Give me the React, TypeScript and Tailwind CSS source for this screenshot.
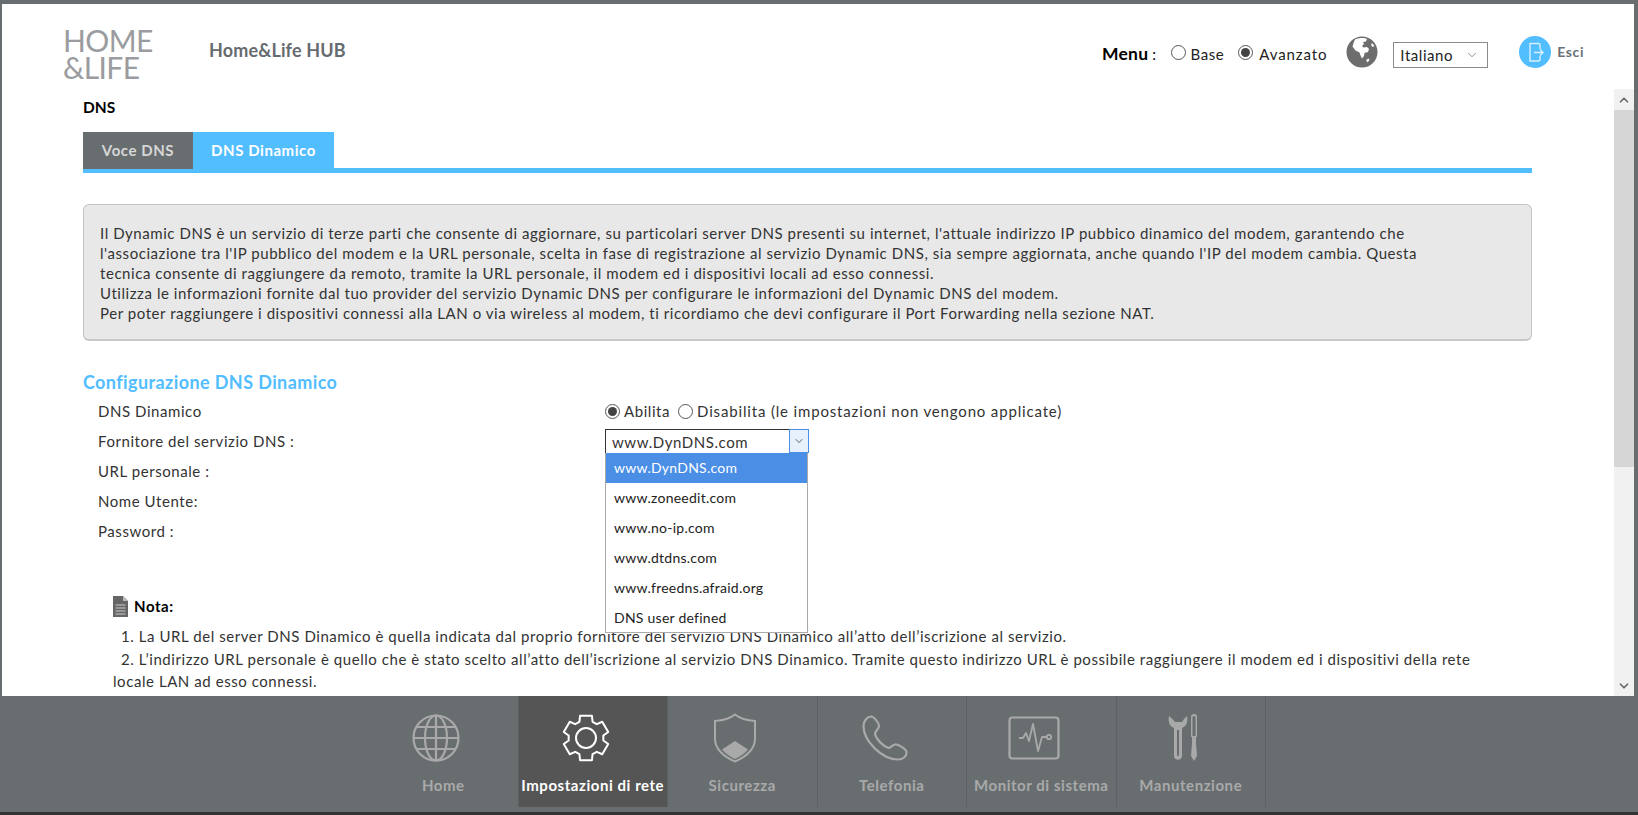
import { ChevronDown, ChevronUp } from 'lucide-react'

const font = "font-['Lato','Noto_Sans',sans-serif]"

function Radio({ on = false }: { on?: boolean }) {
  return (
    <span className="inline-flex w-[15px] h-[15px] rounded-full border border-[#555] bg-white items-center justify-center flex-shrink-0">
      {on && <span className="w-[9px] h-[9px] rounded-full bg-[#444]" />}
    </span>
  )
}

function GlobeSolid() {
  return (
    <svg width="32" height="32" viewBox="0 0 32 32">
      <circle cx="16" cy="16" r="15.5" fill="#6d6d6d" />
      <path d="M9 3.500c3-1.500 9-2 12-.5l-1 2.500-3 .5 1 2-2 2 1.500 1.500 3.500-.5 2 2-1 3-3.500 1-.5 3-2 2.500-1.500-3-1-3-4-2-3-4 1-3.500z" fill="#fff" />
      <path d="M20 24l2.500-1.500 1 1.500-2 2.500zM26 7l2.500 3-2 1-1.500-2z" fill="#fff" />
    </svg>
  )
}

function ExitIcon() {
  return (
    <svg width="32" height="32" viewBox="0 0 32 32">
      <circle cx="16" cy="16" r="16" fill="#52bdff" />
      <path d="M21 13V9a1.500 1.500 0 0 0-1.500-1.500H11V25h8.500a1.500 1.500 0 0 0 1.500-1.500V20" fill="none" stroke="#d8f0ff" strokeWidth="1.400" />
      <path d="M15 16.500h9M21 13.500l3 3-3 3" fill="none" stroke="#d8f0ff" strokeWidth="1.400" />
    </svg>
  )
}

function GlobeLine() {
  return (
    <svg width="48" height="48" viewBox="0 0 48 48" fill="none" stroke="currentColor" strokeWidth="2.200">
      <circle cx="24" cy="24" r="22.500" />
      <ellipse cx="24" cy="24" rx="11" ry="22.500" />
      <path d="M24 1.500v45M1.500 24h45M5 13h38M5 35h38" />
    </svg>
  )
}

// six flat teeth, drawn as one outline
function gearPath() {
  const pt = (r: number, deg: number) => {
    const a = (deg * Math.PI) / 180
    return `${(24 + r * Math.cos(a)).toFixed(2)} ${(24 + r * Math.sin(a)).toFixed(2)}`
  }
  let d = ''
  for (let i = 0; i < 6; i++) {
    const c = -90 + i * 60
    d += `${i === 0 ? 'M' : 'L'}${pt(17.5, c - 22)} L${pt(23, c - 15)} L${pt(23, c + 15)} L${pt(17.5, c + 22)} `
  }
  return d + 'Z'
}

function GearIcon() {
  return (
    <svg width="48" height="48" viewBox="0 0 48 48" fill="none" stroke="currentColor" strokeWidth="2" strokeLinejoin="round">
      <path d={gearPath()} />
      <circle cx="24" cy="24" r="10" />
    </svg>
  )
}

function ShieldIcon() {
  return (
    <svg width="44" height="50" viewBox="0 0 44 50" fill="none" stroke="currentColor" strokeWidth="2">
      <path d="M22 1.500c5 4 12 6 20 6.500v18c0 10-9 18-20 22.500C11 44 2 36 2 26V8c8-.5 15-2.500 20-6.500z" />
      <path d="M22 28l13 8.500c-3 4-8 7-13 9.500-5-2.500-10-5.500-13-9.500z" fill="currentColor" stroke="none" />
    </svg>
  )
}

function PhoneIcon() {
  return (
    <svg width="46" height="46" viewBox="0 0 46 46" fill="none" stroke="currentColor" strokeWidth="2.200" strokeLinejoin="round">
      <path d="M9 1.500C5 2 1.500 6 1.500 11 1.500 26 20 44.500 36 44.500c5 0 9-3.500 8.500-7.500C44 34 36 29 33 29.500c-3 .5-4 3.500-6.500 3.500-6-2-12.500-9-13.500-14 0-3 4-5 4-8S12 1.500 9 1.500z" />
    </svg>
  )
}

function MonitorIcon() {
  return (
    <svg width="52" height="44" viewBox="0 0 52 44" fill="none" stroke="currentColor" strokeWidth="2.200">
      <rect x="1.500" y="1.500" width="49" height="41" rx="3" />
      <path d="M11 22h4l3-5 3 8 4-17 5 27 4-14h4" strokeWidth="1.800" strokeLinejoin="round" />
      <circle cx="41" cy="21" r="2.200" strokeWidth="1.800" />
    </svg>
  )
}

function ToolsIcon() {
  return (
    <svg width="32" height="48" viewBox="0 0 32 48" fill="none">
      <path d="M1 2c-1 5 0 10 5 12v28c0 5 8 5 8 0V14c5-2 6-7 5-12l-3 3-2 3H7L4.500 5z" fill="currentColor" />
      <path d="M9 16h2v25a1 1 0 0 1-2 0z" fill="#686e70" />
      <path d="M23 3a3 3 0 0 1 6 0v20h-1v6l1 13-3 5-3-5 1-13v-6h-1z" fill="currentColor" />
      <path d="M24.500 3.500a1.500 1.500 0 0 1 3 0V22h-3z" fill="#686e70" />
    </svg>
  )
}

function DocIcon() {
  return (
    <svg width="15" height="21" viewBox="0 0 15 21">
      <path d="M0 0h10l5 5v16H0z" fill="#666" />
      <path d="M10 0l5 5h-5z" fill="#bbb" />
      <path d="M2.500 9h10M2.500 12h10M2.500 15h10M2.500 18h10" stroke="#ccc" strokeWidth="1" />
    </svg>
  )
}

const navItems = [
  { label: 'Home', icon: <GlobeLine /> },
  { label: 'Impostazioni di rete', icon: <GearIcon />, active: true },
  { label: 'Sicurezza', icon: <ShieldIcon /> },
  { label: 'Telefonia', icon: <PhoneIcon /> },
  { label: 'Monitor di sistema', icon: <MonitorIcon /> },
  { label: 'Manutenzione', icon: <ToolsIcon /> },
]

const dnsOptions = ['www.DynDNS.com', 'www.zoneedit.com', 'www.no-ip.com', 'www.dtdns.com', 'www.freedns.afraid.org', 'DNS user defined']

const infoLines = [
  "Il Dynamic DNS è un servizio di terze parti che consente di aggiornare, su particolari server DNS presenti su internet, l'attuale indirizzo IP pubbico dinamico del modem, garantendo che",
  "l'associazione tra l'IP pubblico del modem e la URL personale, scelta in fase di registrazione al servizio Dynamic DNS, sia sempre aggiornata, anche quando l'IP del modem cambia. Questa",
  'tecnica consente di raggiungere da remoto, tramite la URL personale, il modem ed i dispositivi locali ad esso connessi.',
  'Utilizza le informazioni fornite dal tuo provider del servizio Dynamic DNS per configurare le informazioni del Dynamic DNS del modem.',
  'Per poter raggiungere i dispositivi connessi alla LAN o via wireless al modem, ti ricordiamo che devi configurare il Port Forwarding nella sezione NAT.',
]

function Row({ label, children }: { label: string; children?: React.ReactNode }) {
  return (
    <div className="flex h-[30px] items-center">
      <div className="w-[522px] pl-[15px]">{label}</div>
      {children}
    </div>
  )
}

export default function App() {
  return (
    <div className={`${font} w-[1638px] h-[815px] bg-[#686e70] pt-1 pl-0.5 pr-1 flex flex-col overflow-hidden text-[15px] tracking-[0.56px] text-[#333]`}>
      <div className="flex-1 min-h-0 bg-white flex flex-col">
        {/* header */}
        <div className="h-[85px] flex-shrink-0 flex items-start pl-[61px] pr-[50px]">
          <div className="w-[146px] mt-[23px] text-[30px] leading-[27px] font-normal text-[#9a9ca0] tracking-[-0.6px]">
            <div>HOME</div>
            <div>&amp;LIFE</div>
          </div>
          <div className="mt-[34px] text-[18px] leading-6 font-bold tracking-[0.15px] text-[#666b70]">Home&amp;Life HUB</div>
          <div className="ml-auto flex items-center mt-[32px] h-8">
            <span className="text-[17.500px] font-bold text-black mt-1 tracking-[0.2px]">Menu</span>
            <span className="ml-1 mr-3.5 mt-1 text-black">:</span>
            <Radio />
            <span className="ml-[5px] mr-3.5 mt-1 text-[#222]">Base</span>
            <Radio on />
            <span className="ml-1.5 mr-[19px] mt-1 text-[#222] tracking-[0.9px]">Avanzato</span>
            <GlobeSolid />
            <div className="ml-[15px] mt-[6px] w-[95px] h-[26px] border border-[#8a8a8a] flex items-center justify-between pl-1.5 pr-2 text-[#222]">
              Italiano
              <ChevronDown size={14} strokeWidth={1.100} className="text-[#555]" />
            </div>
            <div className="ml-[31px]"><ExitIcon /></div>
            <span className="ml-1.5 -mt-0.5 text-[14px] font-bold text-[#6b7076]">Esci</span>
          </div>
        </div>

        {/* scrolling content */}
        <div className="h-[607px] flex-shrink-0 flex">
          <div className="flex-1 min-w-0 overflow-hidden pl-[81px] pr-[82px] relative">
            <h1 className="pt-1.5 h-[43px] text-[15.500px] tracking-normal font-bold text-black leading-6">DNS</h1>
            <div className="flex h-[41px] border-b-[5px] border-[#52bdff] font-bold">
              <div className="w-[110px] h-[37px] bg-[#686e70] text-[#d6d6d6] flex items-center justify-center">Voce DNS</div>
              <div className="w-[141px] h-[36px] bg-[#52bdff] text-white flex items-center justify-center">DNS Dinamico</div>
            </div>
            <div className="mt-[31px] h-[137px] rounded-md border border-[#c4c4c4] border-b-2 border-b-[#c8c8c8] bg-[#e8e8e8] pt-[18px] pl-4 leading-5 text-[#333] whitespace-nowrap">
              {infoLines.map(l => <div key={l}>{l}</div>)}
            </div>
            <h2 className="mt-[29px] text-[18px] tracking-[0.4px] leading-6 font-bold text-[#52bdff]">Configurazione DNS Dinamico</h2>
            <div className="mt-[2px]">
              <Row label="DNS Dinamico">
                <div className="flex items-center">
                  <Radio on /><span className="ml-1 mr-2">Abilita</span>
                  <Radio /><span className="ml-1 tracking-[0.84px]">Disabilita (le impostazioni non vengono applicate)</span>
                </div>
              </Row>
              <Row label="Fornitore del servizio DNS :">
                <div className="w-[204px] h-[24px] flex border-t border-l border-[#333] border-b-[#aaa] relative">
                  <div className="flex-1 pl-1.5 leading-[24px]">www.DynDNS.com</div>
                  <div className="w-5 -mt-px h-[24px] border border-[#4a8ee6] bg-[#e6f1fb] flex items-center justify-center">
                    <ChevronDown size={12} strokeWidth={1.500} className="text-[#333]" />
                  </div>
                  <div className="absolute left-[-1px] top-[23px] w-[203px] h-[180px] bg-white border-x border-b border-[#aaa] z-10">
                    {dnsOptions.map((o, i) => (
                      <div key={o} className={`h-[30px] pl-2 leading-[30px] text-[14px] tracking-[0.25px] ${i === 0 ? 'bg-[#4a8ee6] text-white' : 'text-[#222]'}`}>{o}</div>
                    ))}
                  </div>
                </div>
              </Row>
              <Row label="URL personale :" />
              <Row label="Nome Utente:" />
              <Row label="Password :" />
            </div>
            <div className="mt-[50px] pl-[30px] flex items-center h-[21px] gap-1.5">
              <DocIcon />
              <span className="font-bold text-black">Nota:</span>
            </div>
            <div className="pl-[30px] mt-[8px] leading-[22.500px] text-[#333] whitespace-nowrap">
              <div className="pl-2">1. La URL del server DNS Dinamico è quella indicata dal proprio fornitore del servizio DNS Dinamico all’atto dell’iscrizione al servizio.</div>
              <div className="pl-2">2. L’indirizzo URL personale è quello che è stato scelto all’atto dell’iscrizione al servizio DNS Dinamico. Tramite questo indirizzo URL è possibile raggiungere il modem ed i dispositivi della rete</div>
              <div>locale LAN ad esso connessi.</div>
            </div>
          </div>
          {/* scrollbar */}
          <div className="w-5 flex-shrink-0 bg-[#f1f1f1] flex flex-col">
            <div className="h-[21px] flex items-center justify-center"><ChevronUp size={14} strokeWidth={3} className="text-[#6a6a6a]" /></div>
            <div className="h-[357px] bg-[#d6d6d6]" />
            <div className="mt-auto h-[21px] flex items-center justify-center"><ChevronDown size={14} strokeWidth={3} className="text-[#6a6a6a]" /></div>
          </div>
        </div>
        <div className="flex-1 bg-[#686e70] -mr-1 -ml-0.5 flex justify-center pr-[3px]">
          <div className="flex h-[111px]">
            {navItems.map(item => (
              <div key={item.label} className={`w-[149.500px] flex flex-col items-center border-r border-[#5c6163] ${item.active ? 'bg-[#555555] text-white' : 'text-[#a9a9a9]'}`}>
                <div className="h-[76px] flex items-center justify-center pt-2 pr-3.5">{item.icon}</div>
                <div className="text-[15px] mt-0.5 font-bold whitespace-nowrap tracking-[0.55px]">{item.label}</div>
              </div>
            ))}
          </div>
        </div>
        <div className="h-[3px] bg-[#333] -mr-1 -ml-0.5 flex-shrink-0" />
      </div>
    </div>
  )
}
